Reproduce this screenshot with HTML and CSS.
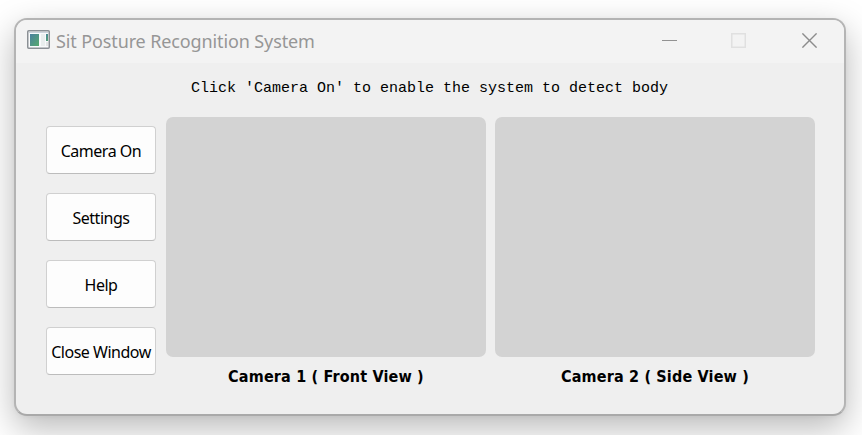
FILE: index.html
```html
<!DOCTYPE html>
<html lang="en">
<head>
<meta charset="utf-8">
<title>Sit Posture Recognition System</title>
<link rel="stylesheet" href="styles.css">
</head>
<body>
<main class="window">
  <header class="titlebar">
    <svg class="app-icon" width="23" height="19" viewBox="0 0 23 19">
      <defs><linearGradient id="tile" x1="0" y1="0" x2="1" y2="1"><stop offset="0" stop-color="#4a809f"/><stop offset="1" stop-color="#55a96d"/></linearGradient></defs>
      <rect x=".75" y=".75" width="21.5" height="17.5" rx="1" fill="#f8fafb" stroke="#8b9095" stroke-width="1.5"/>
      <path d="M2 2.5h19" stroke="#cbd3dc"/>
      <rect x="3" y="4" width="9" height="12" fill="url(#tile)"/>
      <rect x="14" y="4" width="4" height="12" fill="#e9eeee"/>
      <rect x="19" y="4" width="2" height="7" fill="url(#tile)"/>
      <rect x="19" y="12" width="2" height="4" fill="#e2e5e5"/>
    </svg>
    <h1 class="title">Sit Posture Recognition System</h1>
    <div class="controls">
      <svg width="15" height="15" viewBox="0 0 15 15"><path d="M0 7.5h15" stroke="#929292"/></svg>
      <svg class="maximize" width="15" height="15" viewBox="0 0 15 15"><rect x=".75" y=".75" width="13.5" height="13.5" fill="none" stroke="#e0e0e0" stroke-width="1.5"/></svg>
      <svg width="15" height="15" viewBox="0 0 15 15"><path d="M.4.4l14.2 14.2M14.6.4L.4 14.6" stroke="#8c8c8c" stroke-width="1.4"/></svg>
    </div>
  </header>
  <p class="hint">Click 'Camera On' to enable the system to detect body</p>
  <section class="content">
    <nav class="menu">
      <button class="btn">Camera On</button>
      <button class="btn">Settings</button>
      <button class="btn">Help</button>
      <button class="btn">Close Window</button>
    </nav>
    <figure class="camera"><div class="view"></div><figcaption>Camera 1 ( Front View )</figcaption></figure>
    <figure class="camera"><div class="view"></div><figcaption>Camera 2 ( Side View )</figcaption></figure>
  </section>
</main>
</body>
</html>
```
FILE: styles.css
```css
* { box-sizing: border-box; }
body {
  margin: 0;
  height: 435px;
  padding: 18px 16px 0 14px;
  background: #fff;
  overflow: hidden;
}
.window {
  width: 832px;
  height: 398px;
  border: 2px solid #b4b4b4;
  border-bottom-color: #a9a9a9;
  border-radius: 13px;
  background: #efefef;
  box-shadow: 0 12px 34px rgba(0, 0, 0, .28), 0 1px 5px rgba(0, 0, 0, .04);
}
.titlebar {
  display: flex;
  align-items: center;
  height: 43px;
  padding: 0 27px 0 11px;
  background: #f3f3f3;
  border-radius: 11px 11px 0 0;
}
.app-icon { margin-top: -4px; }
.title {
  margin: -2px 0 0 6px;
  font: 400 18px/24px "Noto Sans", sans-serif;
  letter-spacing: -.12px;
  color: #969696;
  white-space: nowrap;
}
.controls {
  display: flex;
  gap: 55px;
  margin: -2px 0 0 auto;
}
.maximize { margin: 0 1px 0 -1px; }
.hint {
  margin: 0;
  height: 54px;
  padding: 16px 0 0 175px;
  font: 15px/20px "Liberation Mono", monospace;
  color: #000;
  white-space: nowrap;
}
.content {
  display: flex;
  padding-left: 30px;
}
.menu {
  display: flex;
  flex-direction: column;
  gap: 19px;
  width: 110px;
  margin-right: 10px;
  padding-top: 9px;
}
.btn {
  height: 48px;
  padding: 2px 0 0;
  border: 1px solid #d0d0d0;
  border-bottom-color: #bcbcbc;
  border-radius: 4px;
  background: #fdfdfd;
  font: 16px/22px "Noto Sans", sans-serif;
  letter-spacing: -.48px;
  color: #000;
  white-space: nowrap;
}
.camera {
  width: 320px;
  margin: 0 9px 0 0;
}
.view {
  height: 240px;
  border-radius: 7px;
  background: #d3d3d3;
}
.camera figcaption {
  padding-top: 9px;
  font: 700 16px/22px "DejaVu Sans Condensed", "DejaVu Sans", sans-serif;
  font-stretch: condensed;
  letter-spacing: .17px;
  text-align: center;
  color: #000;
}
```
